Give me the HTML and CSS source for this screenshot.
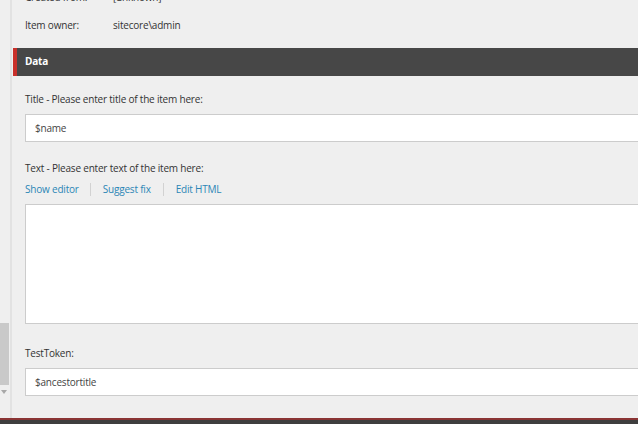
FILE: index.html
```html
<!DOCTYPE html>
<html>
<head>
<meta charset="utf-8">
<link rel="stylesheet" href="styles.css">
</head>
<body>
<div class="page">
  <div class="gutter">
    <div class="track">
      <div class="thumb"></div>
      <div class="arrow"></div>
    </div>
  </div>
  <div class="main">
    <div class="info">
      <div class="info-row"><span class="info-key">Created from:</span><span class="info-val">[unknown]</span></div>
      <div class="info-row"><span class="info-key">Item owner:</span><span class="info-val">sitecore\admin</span></div>
    </div>
    <div class="section-head">Data</div>
    <div class="fields">
      <div class="field">
        <div class="label">Title - Please enter title of the item here:</div>
        <div class="input">$name</div>
      </div>
      <div class="field field-text">
        <div class="label">Text - Please enter text of the item here:</div>
        <div class="links">
          <a class="link">Show editor</a>
          <a class="link">Suggest fix</a>
          <a class="link">Edit HTML</a>
        </div>
        <div class="textarea"></div>
      </div>
      <div class="field field-token">
        <div class="label">TestToken:</div>
        <div class="input">$ancestortitle</div>
      </div>
    </div>
  </div>
</div>
<div class="footer"></div>
</body>
</html>
```
FILE: styles.css
```css
html, body {
  margin: 0;
  padding: 0;
  height: 100%;
  overflow: hidden;
}
body {
  background: #efefef;
  font-family: "Open Sans", "Noto Sans", sans-serif;
  font-size: 10px;
  letter-spacing: -0.2px;
  color: #333;
  display: flex;
  flex-direction: column;
}
.page {
  flex: 1;
  display: flex;
  min-height: 0;
}
.gutter {
  width: 10px;
  flex: none;
  background: #efefef;
  border-right: 2px solid #e2e2e2;
  position: relative;
}
.track {
  position: absolute;
  left: 0;
  top: 323px;
  width: 9px;
}
.thumb {
  height: 62px;
  background: #c9c9c9;
}
.arrow {
  margin: 5px 0 0 1px;
  width: 0;
  height: 0;
  border-left: 3px solid transparent;
  border-right: 3px solid transparent;
  border-top: 4px solid #a8a8a8;
}
.main {
  flex: none;
  width: 680px;
  margin-left: 1px;
}
.info {
  margin-top: -17px;
  padding-left: 12px;
}
.info-row {
  height: 28px;
  line-height: 28px;
  display: flex;
}
.info-key {
  width: 88px;
}
.section-head {
  margin-top: 9px;
  height: 28px;
  line-height: 27px;
  background: #474747;
  border-left: 4px solid #c8302a;
  color: #fff;
  font-weight: bold;
  padding-left: 8px;
  box-sizing: border-box;
}
.fields {
  padding-left: 12px;
}
.field {
  padding-top: 15px;
}
.field-text {
  padding-top: 18px;
}
.field-token {
  padding-top: 21px;
}
.label {
  line-height: 16px;
}
.input {
  margin-top: 7px;
  height: 28px;
  box-sizing: border-box;
  background: #fff;
  border: 1px solid #cccccc;
  line-height: 26px;
  padding-left: 9px;
  color: #444;
}
.links {
  margin-top: 5px;
  display: flex;
  align-items: center;
  height: 16px;
}
.link {
  color: #2b86b6;
  padding: 0 12px;
  line-height: 13px;
  border-left: 1px solid #d2d2d2;
}
.link:first-child {
  padding-left: 0;
  border-left: none;
  padding-right: 11px;
}
.textarea {
  margin-top: 7px;
  height: 120px;
  box-sizing: border-box;
  background: #fff;
  border: 1px solid #cccccc;
}
.footer {
  flex: none;
  height: 4px;
  border-top: 2px solid #8a3434;
  background: #3e3e3e;
}
```
